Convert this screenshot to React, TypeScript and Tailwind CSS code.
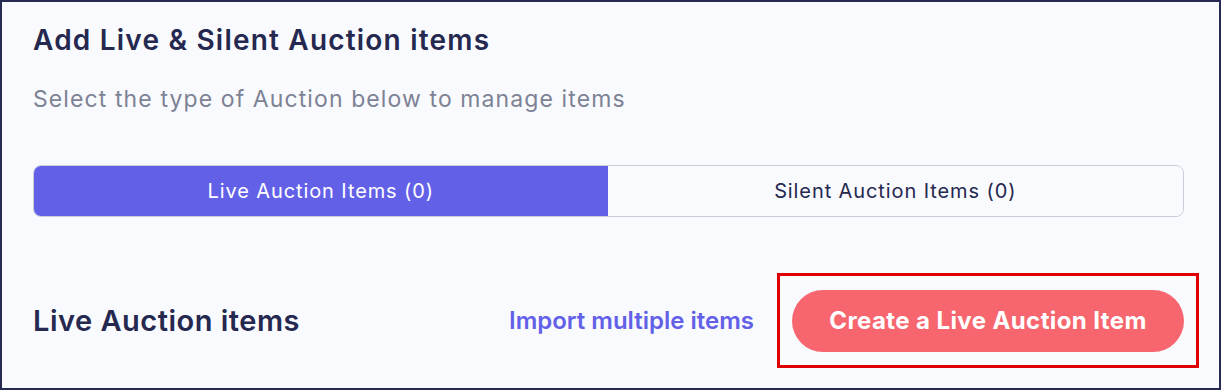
export default function App() {
  return (
    <div className="w-[1221px] h-[390px] overflow-hidden bg-[#262a52] p-[2px]">
      <div
        className="h-full bg-[#f9fafe] pl-[31px] pr-[35px] pt-[20px]"
        style={{ fontFamily: "Inter, 'Noto Sans', sans-serif" }}
      >
        <h1 className="text-[28px] leading-[36px] font-semibold text-[#25284f] tracking-[1.2px]">
          Add Live &amp; Silent Auction items
        </h1>
        <p className="mt-[26px] text-[23px] leading-[30px] text-[#7d8294] tracking-[1.1px]">
          Select the type of Auction below to manage items
        </p>

        {/* Tabs */}
        <div className="mt-[51px] flex h-[52px] rounded-[8px] border border-[#c9ccd9] overflow-hidden">
          <button className="flex-1 -m-px bg-[#6360e8] text-white text-[20px] tracking-[0.9px] flex items-center justify-center">
            Live Auction Items (0)
          </button>
          <button className="flex-1 bg-[#f9fafe] text-[#25284f] text-[20px] tracking-[0.9px] flex items-center justify-center">
            Silent Auction Items (0)
          </button>
        </div>

        {/* Section header */}
        <div className="mt-[73px] flex items-center h-[62px]">
          <h2 className="flex-1 text-[29px] font-semibold text-[#25284f] tracking-[0.5px]">
            Live Auction items
          </h2>
          <a className="text-[24px] font-semibold text-[#6360e8] mr-[38px]">
            Import multiple items
          </a>
          <div className="relative">
            <button className="w-[392px] h-[62px] rounded-full bg-[#f7666e] text-white text-[24px] font-bold tracking-[0.4px]">
              Create a Live Auction Item
            </button>
            <div className="absolute -left-[15px] -right-[15px] -top-[17px] -bottom-[16px] border-[3px] border-[#e00000] pointer-events-none" />
          </div>
        </div>
      </div>
    </div>
  );
}
